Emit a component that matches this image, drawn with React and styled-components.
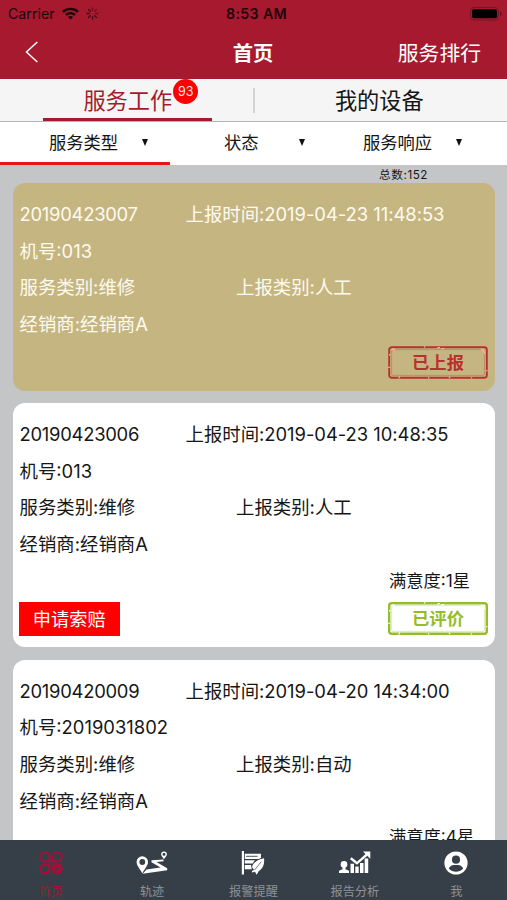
import styled, { createGlobalStyle } from "styled-components";

const orders = [
  {
    id: "20190423007",
    time: "2019-04-23 11:48:53",
    machine: "013",
    type: "维修",
    report: "人工",
    dealer: "经销商A",
    status: "已上报",
    color: "#b9302f",
    highlight: true,
  },
  {
    id: "20190423006",
    time: "2019-04-23 10:48:35",
    machine: "013",
    type: "维修",
    report: "人工",
    dealer: "经销商A",
    stars: 1,
    claim: true,
    status: "已评价",
    color: "#94bd29",
    bold: true,
  },
  {
    id: "20190420009",
    time: "2019-04-20 14:34:00",
    machine: "2019031802",
    type: "维修",
    report: "自动",
    dealer: "经销商A",
    stars: 4,
    status: "已评价",
    color: "#94bd29",
    bold: true,
  },
];

const WifiIcon = () => (
  <svg width="17" height="13" viewBox="0 0 17 13">
    <g fill="none" stroke="#1c0509" strokeWidth="2.3">
      <path d="M1 4.8C5.2.8 11.8.8 16 4.8" />
      <path d="M3.9 7.9c2.6-2.5 6.6-2.5 9.2 0" />
    </g>
    <path d="M8.5 12.6 5.9 9.9c1.5-1.3 3.7-1.3 5.2 0z" fill="#1c0509" />
  </svg>
);

const SpinnerIcon = () => (
  <svg width="13" height="13" viewBox="-6.5 -6.5 13 13">
    {[0, 45, 90, 135, 180, 225, 270, 315].map((deg) => (
      <path
        key={deg}
        d="M0-3.1V-5.6"
        transform={`rotate(${deg})`}
        stroke="#3a0a12"
        strokeOpacity={deg < 100 ? 0.5 : 0.9}
        strokeWidth="1.3"
        strokeLinecap="round"
      />
    ))}
  </svg>
);

const BatteryIcon = () => (
  <svg width="33" height="14" viewBox="0 0 33 14">
    <rect x="0.5" y="0.5" width="28" height="12.5" rx="3.6" fill="none" stroke="#7a1322" />
    <rect x="2" y="2.2" width="25" height="9" rx="2" fill="#000" />
    <path d="M30.2 4.6c1.8.6 1.8 3.8 0 4.4z" fill="#5a0e19" />
  </svg>
);

const BackIcon = () => (
  <svg width="14" height="22" viewBox="0 0 14 22">
    <path d="M12.3 1 1.5 11l10.8 10" fill="none" stroke="#fff" strokeWidth="1.5" />
  </svg>
);

const HomeIcon = () => (
  <svg width="24" height="24" viewBox="0 0 24 24">
    <g fill="none" stroke="#a60f3b" strokeWidth="2.2">
      <path d="M5.7 1.5h.6a4.2 4.2 0 0 1 4.2 4.2v4.6H5.7a4.4 4.4 0 0 1 0-8.8z" />
      <path d="M18.3 1.5h-.6a4.2 4.2 0 0 0-4.2 4.2v4.6h4.8a4.4 4.4 0 0 0 0-8.8z" />
      <path d="M5.7 22.3h.6a4.2 4.2 0 0 0 4.2-4.2v-4.6H5.7a4.4 4.4 0 0 0 0 8.8z" />
      <circle cx="18" cy="17.9" r="3.3" strokeWidth="3.6" />
      <path d="M18 12.2v2M18 21.7v2M12.2 17.9h2M21.7 17.9h2M13.8 13.7l1.4 1.4M20.9 20.8l1.4 1.4M22.3 13.7l-1.4 1.4M13.8 22.1l1.4-1.4" />
    </g>
  </svg>
);

const TrackIcon = () => (
  <svg width="32" height="24" viewBox="0 0 32 24">
    <path
      d="M6.3 5.3A5.7 5.7 0 0 0 .6 11c0 4 4 7.5 5.7 11.4C8 18.5 12 15 12 11a5.7 5.7 0 0 0-5.7-5.7zm0 2.8a2.9 2.9 0 1 1 0 5.8 2.9 2.9 0 0 1 0-5.8z"
      fill="#fff"
      fillRule="evenodd"
    />
    <path
      d="M28 .4a2.9 2.9 0 0 0-2.9 2.9c0 2 2 3 2.9 5 .9-2 2.9-3 2.9-5A2.9 2.9 0 0 0 28 .4zm0 1.4a1.5 1.5 0 1 1 0 3 1.5 1.5 0 0 1 0-3z"
      fill="#fff"
      fillRule="evenodd"
    />
    <path d="M27.5 8.5 15.5 9.3v2l9 5.2-14 1.9-3.8 4.3 24.5-3.4v-2L20.5 11l7-.8z" fill="#fff" />
  </svg>
);

const AlarmIcon = () => (
  <svg width="24" height="24" viewBox="0 0 24 24">
    <g fill="#fff">
      <path d="M.8 0H3v23.5H.8z" />
      <path d="M3.8 2.8H20v4.2l-2.5 1H3.8z" />
      <path d="M3.8 9.3h10l-2.2 3.2H3.8zM3.8 14h6.2l.8 4.2h-7z" />
    </g>
    <path d="M5 5.3h11.5" stroke="#363f47" strokeWidth="0.9" />
    <path d="M23 7.2c-5.6.8-10.6 3.8-12 8.7l2.2 3-2.2.9v1.7l3-.7 1.6 2.9 2.1-3.5c4.3-2.4 6.1-7.3 5.3-13z" fill="#fff" />
    <path d="m20.3 10.7-6.600 8.200" stroke="#363f47" strokeWidth="0.7" />
  </svg>
);

const ReportIcon = () => (
  <svg width="32" height="24" viewBox="0 0 32 24">
    <g fill="#fff">
      <circle cx="5" cy="13.4" r="3.3" />
      <path d="M3.5 15h3v3.2l3.5 1.6V22H0v-2.2l3.5-1.6z" />
      <path d="M11.5 12.8H15V22h-3.5zM16.3 15.5h3.4V22h-3.4zM21 12h3.5v10H21zM25.7 7.5h3.5V22h-3.5z" />
      <path d="M23.9.4h7.4v7.4z" />
    </g>
    <path d="m11.8 7.3 6.1 5L28.5 3" fill="none" stroke="#fff" strokeWidth="2.4" />
  </svg>
);

const MineIcon = () => (
  <svg width="24" height="24" viewBox="0 0 24 24">
    <circle cx="12" cy="12" r="11.6" fill="#fff" />
    <circle cx="12" cy="8.7" r="4.1" fill="#363f47" />
    <path d="M4.8 17.5c1.4-3.3 4-3.6 7.2-3.6s5.8.3 7.2 3.6c-4 4.3-10.4 4.3-14.4 0z" fill="#363f47" />
  </svg>
);

const StampFrame = ({ color, bold, paper }) => (
  <FrameSvg viewBox="0 0 100 33">
    <rect
      x="1.2"
      y="1.2"
      width="97.6"
      height="30.6"
      rx="2.5"
      fill="none"
      stroke={color}
      strokeWidth={bold ? 2.4 : 1.9}
    />
    <rect
      x="3.6"
      y="3.6"
      width="92.8"
      height="25.8"
      rx="1.5"
      fill="none"
      stroke={color}
      strokeWidth="0.9"
      strokeOpacity="0.35"
    />
    {/* worn ink */}
    <path
      d="M49 2.2l3-1M53 3l3-.6M36 .4l1.2 1M93 2.6l3 2.4M96 5l.8 2.5M.2 21.5l2-.5M1.5 8l.4 1.5M10.500 32.500l1.500-2M40 32.300l1.200-.8M61 32l1.200-1M83 32.300l1-1M97.800 25l1.600-.5M4 2.800l3 .8"
      fill="none"
      stroke={paper}
      strokeWidth="1.2"
    />
  </FrameSvg>
);

const OrderCard = ({ order }) => (
  <Card $highlight={order.highlight}>
    <Row>
      <Cell $width={166}>
        <Num $spacing={-0.25}>{order.id}</Num>
      </Cell>
      <Cell>
        上报时间<Num $spacing={-0.03}>:{order.time}</Num>
      </Cell>
    </Row>
    <Row>
      <Cell>
        机号<Num>:{order.machine}</Num>
      </Cell>
    </Row>
    <Row>
      <Cell $width={216.5}>服务类别:{order.type}</Cell>
      <Cell>上报类别:{order.report}</Cell>
    </Row>
    <Row>
      <Cell>经销商:{order.dealer}</Cell>
    </Row>
    {order.stars && (
      <Row>
        <Stars>满意度:{order.stars}星</Stars>
      </Row>
    )}
    <CardFooter>
      {order.claim && <ClaimButton>申请索赔</ClaimButton>}
      <Stamp $color={order.color}>
        <StampFrame color={order.color} bold={order.bold} paper={order.highlight ? "#d9cca0" : "#fff"} />
        {order.status}
      </Stamp>
    </CardFooter>
  </Card>
);

const App = () => {
  return (
    <Screen>
      <GlobalStyle />
      <Header>
        <StatusBar>
          <Carrier>
            Carrier <WifiIcon /> <SpinnerIcon />
          </Carrier>
          <Clock>8:53 AM</Clock>
          <BatteryIcon />
        </StatusBar>
        <NavBar>
          <BackIcon />
          <Title>首页</Title>
          <NavLink>服务排行</NavLink>
        </NavBar>
      </Header>
      <Tabs>
        <Tab>
          <TabLabel $active>
            服务工作
            <Badge>93</Badge>
          </TabLabel>
        </Tab>
        <TabDivider />
        <Tab>
          <TabLabel>我的设备</TabLabel>
        </Tab>
      </Tabs>
      <Filters>
        <Filter $active $left={49}>
          服务类型 <Arrow />
        </Filter>
        <Filter $left={48}>
          状态 <Arrow />
        </Filter>
        <Filter $left={30}>
          服务响应 <Arrow />
        </Filter>
      </Filters>
      <List>
        <Total>总数:152</Total>
        {orders.map((order) => (
          <OrderCard key={order.id} order={order} />
        ))}
      </List>
      <TabBar>
        <TabItem $active>
          <HomeIcon />
          首页
        </TabItem>
        <TabItem>
          <TrackIcon />
          轨迹
        </TabItem>
        <TabItem>
          <AlarmIcon />
          报警提醒
        </TabItem>
        <TabItem>
          <ReportIcon />
          报告分析
        </TabItem>
        <TabItem>
          <MineIcon />
          我
        </TabItem>
      </TabBar>
    </Screen>
  );
};

export default App;

const GlobalStyle = createGlobalStyle`
  * {
    box-sizing: border-box;
  }
  body {
    margin: 0;
    font-family: Inter, "Noto Sans CJK SC", sans-serif;
    color: #161616;
  }
  svg {
    flex-shrink: 0;
    display: block;
  }
`;

const Screen = styled.div`
  display: flex;
  flex-direction: column;
  width: 507px;
  height: 900px;
  overflow: hidden;
`;

const Header = styled.header`
  height: 79px;
  background-color: #a6192e;
`;

const StatusBar = styled.div`
  display: grid;
  grid-template-columns: 1fr auto 1fr;
  align-items: center;
  height: 27px;
  padding: 0 4px 0 8px;
  color: #1c0509;

  > svg {
    justify-self: end;
  }
`;

const Carrier = styled.div`
  display: flex;
  align-items: center;
  gap: 7px;
  font-size: 14.2px;
`;

const Clock = styled.div`
  font-size: 14.2px;
  font-weight: 600;
  letter-spacing: 0.35px;
  margin-left: 2px;
`;

const NavBar = styled.div`
  display: grid;
  grid-template-columns: 1fr auto 1fr;
  align-items: center;
  height: 50px;
  padding: 0 26px 0 25px;
  color: white;
`;

const Title = styled.h1`
  margin: 0;
  padding-top: 3px;
  font-size: 20.3px;
  font-weight: 700;
  line-height: 30px;
`;

const NavLink = styled.a`
  justify-self: end;
  padding-top: 3px;
  font-size: 20.8px;
  line-height: 30px;
`;

const Tabs = styled.div`
  display: flex;
  align-items: center;
  height: 43px;
  background-color: #f5f5f5;
  border-bottom: 1px solid #b4b4b4;
`;

const Tab = styled.div`
  flex: 1;
  display: flex;
  justify-content: center;

  &:first-child {
    padding-left: 3px;
  }
  &:last-child {
    padding-right: 3px;
  }
`;

const TabLabel = styled.div`
  position: relative;
  width: 169px;
  height: 42px;
  font-size: 22.2px;
  line-height: 43px;
  text-align: center;
  color: ${({ $active }) => ($active ? "#a6192e" : "#161616")};
  border-bottom: 3px solid ${({ $active }) => ($active ? "#a6192e" : "transparent")};
`;

const Badge = styled.span`
  position: absolute;
  top: 0;
  right: 14px;
  width: 25px;
  height: 25px;
  border-radius: 50%;
  background-color: #ff0000;
  color: #ffe9e9;
  font-size: 12.5px;
  line-height: 25px;
`;

const TabDivider = styled.div`
  width: 2px;
  height: 25px;
  background-color: #d3d3d3;
`;

const Filters = styled.div`
  display: grid;
  grid-template-columns: 176px 157px 174px;
  height: 43px;
  background-color: white;
`;

const Filter = styled.div`
  position: relative;
  display: flex;
  align-items: center;
  justify-content: space-between;
  padding: 0 27px 2px ${({ $left }) => $left}px;
  font-size: 17.3px;
  line-height: 26px;

  &:nth-child(3) {
    padding-right: 44px;
  }

  &::after {
    content: "";
    position: absolute;
    left: 0;
    bottom: 0;
    width: 170px;
    height: 3px;
    background-color: ${({ $active }) => ($active ? "#e8161b" : "transparent")};
  }

  & + &::before {
    content: "";
    position: absolute;
    left: -1px;
    top: 6px;
    width: 1px;
    height: 30px;
    background-color: #d0d0d0;
  }
`;

const Arrow = styled.i`
  margin-right: 1px;
  border: 3.5px solid transparent;
  border-top: 7px solid #111;
  border-bottom: 0;
`;

const List = styled.main`
  flex: 1;
  min-height: 0;
  overflow: hidden;
  padding: 0 12px 0 13px;
  background-color: #c4c5c7;
`;

const Total = styled.div`
  height: 18px;
  padding-left: 366px;
  font-size: 11.7px;
  letter-spacing: 0.55px;
  line-height: 20px;
`;

const Card = styled.section`
  margin-bottom: 12.3px;
  padding: 13.2px 7px 12px 6.5px;
  border-radius: 12px;
  background-color: ${({ $highlight }) => ($highlight ? "#c5b681" : "white")};
  color: ${({ $highlight }) => ($highlight ? "#fffaf0" : "#161616")};
`;

const Row = styled.div`
  display: flex;
  height: 36.6px;
  font-size: 18.4px;
  line-height: 36.6px;
  white-space: nowrap;
`;

const Cell = styled.div`
  width: ${({ $width }) => ($width ? `${$width}px` : "auto")};
`;

const Num = styled.span`
  letter-spacing: ${({ $spacing = 0 }) => $spacing}px;
`;

const Stars = styled.div`
  width: 99px;
  margin-left: auto;
  font-size: 17.3px;
`;

const CardFooter = styled.div`
  display: flex;
  align-items: center;
  height: 33px;
  margin-top: 3.2px;
`;

const ClaimButton = styled.button`
  width: 100.5px;
  height: 34px;
  margin-left: -0.5px;
  padding: 0;
  border: 0;
  background-color: #ff0000;
  color: white;
  font-family: inherit;
  font-size: 18.2px;
  line-height: 34px;
`;

const Stamp = styled.div`
  position: relative;
  width: 100px;
  height: 33px;
  margin-left: auto;
  color: ${({ $color }) => $color};
  font-size: 17.3px;
  font-weight: 700;
  line-height: 34px;
  text-align: center;
`;

const FrameSvg = styled.svg`
  position: absolute;
  inset: 0;
  width: 100%;
  height: 100%;
`;

const TabBar = styled.nav`
  display: grid;
  grid-template-columns: repeat(5, 1fr);
  height: 60px;
  background-color: #363f47;
`;

const TabItem = styled.a`
  display: flex;
  flex-direction: column;
  align-items: center;
  gap: 8px;
  padding-top: 11px;
  font-size: 12.2px;
  line-height: 17px;
  color: ${({ $active }) => ($active ? "#a11535" : "#8e9296")};
`;
